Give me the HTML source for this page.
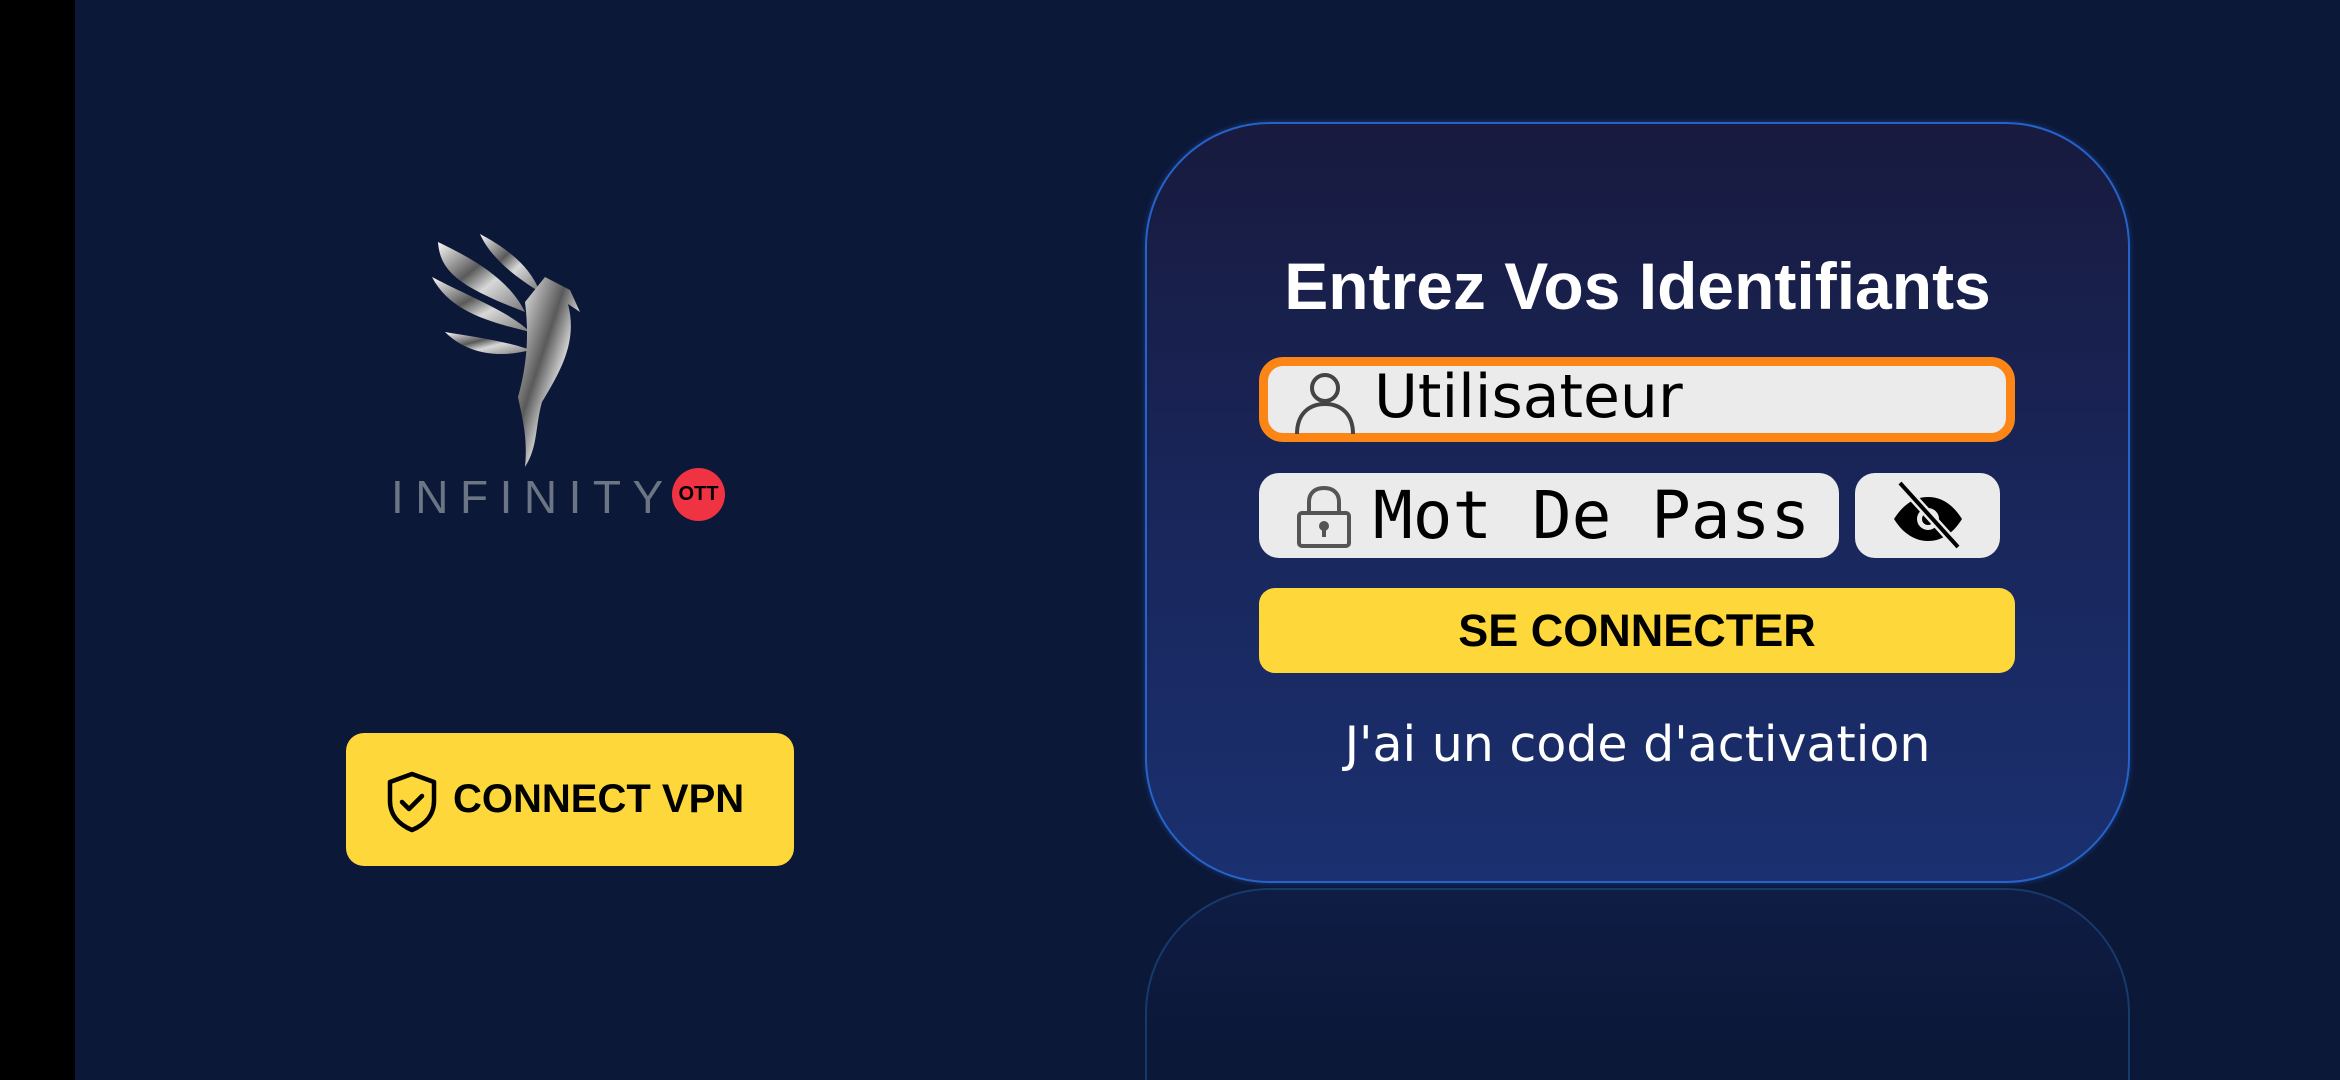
<!DOCTYPE html>
<html><head><meta charset="utf-8"><style>
*{margin:0;padding:0;box-sizing:border-box}
html,body{width:2340px;height:1080px;overflow:hidden}
body{background:#0c1838;position:relative;font-family:"Liberation Sans","DejaVu Sans",sans-serif}
.bar{position:absolute;left:0;top:0;width:75px;height:1080px;background:#000}
.card{position:absolute;left:1145px;top:122px;width:985px;height:761px;border-radius:125px;border:2px solid #2563c9;background:linear-gradient(180deg,#181a3e 0%,#19265a 50%,#1a3070 100%);box-shadow:0 0 6px rgba(40,110,220,.4)}
.refl{position:absolute;left:1145px;top:888px;width:985px;height:192px;border-radius:125px 125px 0 0;border:2px solid #163a6a;border-bottom:none;background:linear-gradient(180deg,#0f1c44 0%,#0c1838 80%)}
.title{position:absolute;left:1145px;width:985px;top:248px;text-align:center;color:#fff;font-weight:bold;font-size:66px}
.field{position:absolute;background:#ebebeb;border-radius:20px}
.user{left:1259px;top:357px;width:756px;height:85px;border:9px solid #fb8616;border-radius:24px}
.pass{left:1259px;top:473px;width:580px;height:85px}
.eye{left:1855px;top:473px;width:145px;height:85px}
.btn{position:absolute;left:1259px;top:588px;width:756px;height:85px;background:#fed83a;border-radius:16px;text-align:center;line-height:85px;font-weight:bold;font-size:45px;color:#000}
.code{position:absolute;left:1145px;width:985px;top:716px;text-align:center;color:#fff;font-size:49px;font-family:"DejaVu Sans","Liberation Sans",sans-serif}
.vpn{position:absolute;left:346px;top:733px;width:448px;height:133px;background:#fed83a;border-radius:18px;font-weight:bold;font-size:40px;color:#000}
</style></head><body>
<div class="bar"></div>
<svg style="position:absolute;left:430px;top:232px" width="180" height="240" viewBox="0 0 180 240">
<defs><linearGradient id="g" x1="0" y1="0" x2="1" y2="1"><stop offset="0" stop-color="#fafafa"/><stop offset=".4" stop-color="#5a5a5a"/><stop offset=".6" stop-color="#d8d8d8"/><stop offset="1" stop-color="#777"/></linearGradient></defs>
<path d="M8 10 C10 40 30 55 95 80 C80 50 50 30 8 10Z" fill="url(#g)"/>
<path d="M50 2 C60 25 85 45 110 60 C100 35 80 18 50 2Z" fill="url(#g)"/>
<path d="M2 45 C20 80 60 90 100 100 C80 80 40 65 2 45Z" fill="url(#g)"/>
<path d="M15 100 C40 125 75 125 100 118 C80 110 45 105 15 100Z" fill="url(#g)"/>
<path d="M95 70 L115 45 L140 58 L150 80 L138 72 C148 110 130 140 112 170 C105 195 108 215 95 235 C98 205 92 185 88 165 C95 140 100 110 95 70Z" fill="url(#g)"/>
</svg>
<div style="position:absolute;left:391px;top:470px;font-size:46px;letter-spacing:11.5px;color:#6b7584;font-family:'Liberation Sans',sans-serif">INFINITY</div>
<div style="position:absolute;left:672px;top:468px;width:53px;height:53px;border-radius:50%;background:#ef3342;color:#000;font-weight:bold;font-size:20px;text-align:center;line-height:53px">OTT</div>

<div class="vpn">
<svg style="position:absolute;left:40px;top:38px" width="52" height="62" viewBox="0 0 52 62"><path d="M26 3 L48 11 V30 C48 45 38 54 26 59 C14 54 4 45 4 30 V11 Z" fill="none" stroke="#000" stroke-width="4.5" stroke-linejoin="round"/><path d="M16 31 L23 38 L36 25" fill="none" stroke="#000" stroke-width="4.5" stroke-linecap="round" stroke-linejoin="round"/></svg>
<div style="position:absolute;left:107px;top:44px">CONNECT VPN</div></div>

<div class="refl"></div>
<div class="card"></div>
<div class="title">Entrez Vos Identifiants</div>
<div class="field user">
<svg style="position:absolute;left:26px;top:4px" width="62" height="64" viewBox="0 0 62 64"><circle cx="31" cy="18" r="13" fill="none" stroke="#444" stroke-width="4"/><path d="M3 64 C3 44 15 34 31 34 C47 34 59 44 59 64" fill="none" stroke="#444" stroke-width="4"/></svg>
<div style="position:absolute;left:106px;top:-4px;font-size:60px;color:#000;font-family:'DejaVu Sans',sans-serif">Utilisateur</div></div>
<div class="field pass">
<svg style="position:absolute;left:36px;top:12px" width="58" height="64" viewBox="0 0 58 64"><path d="M14 28 V17 C14 8 20 3 29 3 C38 3 44 8 44 17 V28" fill="none" stroke="#555" stroke-width="4"/><rect x="4" y="28" width="50" height="33" rx="3" fill="none" stroke="#555" stroke-width="4"/><circle cx="29" cy="41" r="5" fill="#555"/><rect x="27" y="42" width="4" height="10" fill="#555"/></svg>
<div style="position:absolute;left:114px;top:0px;font-size:66px;line-height:85px;color:#000;font-family:'DejaVu Sans Mono','Liberation Mono',monospace">Mot De Pass</div></div>
<div class="field eye">
<svg style="position:absolute;left:35px;top:8px" width="76" height="70" viewBox="0 0 76 70"><path d="M4 38 C14 22 26 16 38 16 C50 16 62 22 72 38 C62 54 50 60 38 60 C26 60 14 54 4 38 Z" fill="#000"/><circle cx="38" cy="38" r="11" fill="#ebebeb"/><circle cx="38" cy="38" r="6" fill="#000"/><path d="M10 2 L68 66" stroke="#ebebeb" stroke-width="9"/><path d="M10 2 L68 66" stroke="#000" stroke-width="4"/></svg></div>
<div class="btn">SE CONNECTER</div>
<div class="code">J'ai un code d'activation</div>
</body></html>
